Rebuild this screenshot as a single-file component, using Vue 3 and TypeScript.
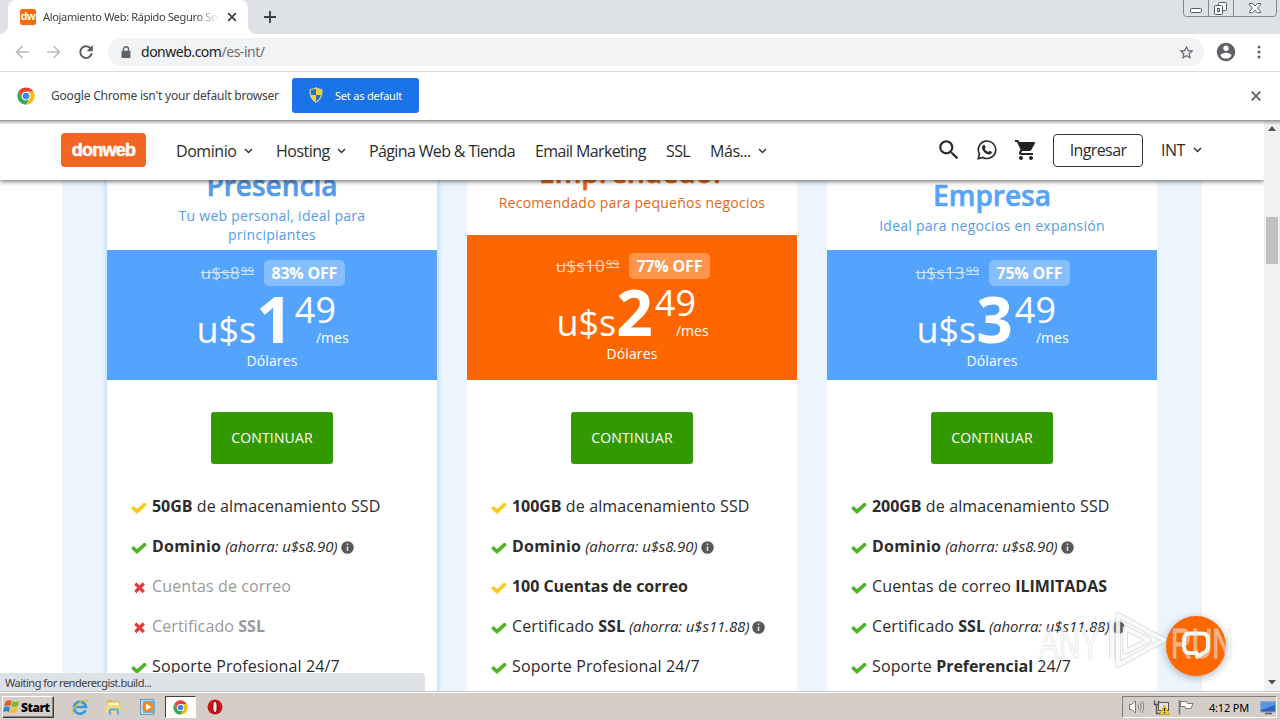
<script setup lang="ts">
interface Feature {
  icon: 'gold' | 'green' | 'cross'
  pre?: string
  bold?: string
  post?: string
  note?: string
}
interface Plan {
  key: string
  name: string
  tagline: string
  oldPrice: string
  off: string
  units: string
  features: Feature[]
}

const nav = [
  { label: 'Dominio', menu: true },
  { label: 'Hosting', menu: true },
  { label: 'Página Web & Tienda', menu: false },
  { label: 'Email Marketing', menu: false },
  { label: 'SSL', menu: false },
  { label: 'Más...', menu: true },
]

const plans: Plan[] = [
  {
    key: 'presencia', name: 'Presencia', tagline: 'Tu web personal, ideal para principiantes',
    oldPrice: '8', off: '83% OFF', units: '1',
    features: [
      { icon: 'gold', bold: '50GB', post: ' de almacenamiento SSD' },
      { icon: 'green', bold: 'Dominio', note: '(ahorra: u$s8.90)' },
      { icon: 'cross', pre: 'Cuentas de correo' },
      { icon: 'cross', pre: 'Certificado ', bold: 'SSL' },
      { icon: 'green', pre: 'Soporte Profesional 24/7' },
    ],
  },
  {
    key: 'emprendedor', name: 'Emprendedor', tagline: 'Recomendado para pequeños negocios',
    oldPrice: '10', off: '77% OFF', units: '2',
    features: [
      { icon: 'gold', bold: '100GB', post: ' de almacenamiento SSD' },
      { icon: 'green', bold: 'Dominio', note: '(ahorra: u$s8.90)' },
      { icon: 'gold', bold: '100 Cuentas de correo' },
      { icon: 'green', pre: 'Certificado ', bold: 'SSL', note: '(ahorra: u$s11.88)' },
      { icon: 'green', pre: 'Soporte Profesional 24/7' },
    ],
  },
  {
    key: 'empresa', name: 'Empresa', tagline: 'Ideal para negocios en expansión',
    oldPrice: '13', off: '75% OFF', units: '3',
    features: [
      { icon: 'green', bold: '200GB', post: ' de almacenamiento SSD' },
      { icon: 'green', bold: 'Dominio', note: '(ahorra: u$s8.90)' },
      { icon: 'green', pre: 'Cuentas de correo ', bold: 'ILIMITADAS' },
      { icon: 'green', pre: 'Certificado ', bold: 'SSL', note: '(ahorra: u$s11.88)' },
      { icon: 'green', pre: 'Soporte ', bold: 'Preferencial', post: ' 24/7' },
    ],
  },
]
</script>

<template>
  <div class="screen">
    <div class="tabstrip">
      <div class="tab">
        <span class="favicon">dw</span>
        <span class="tab-title">Alojamiento Web: Rápido Seguro Sop</span>
        <svg class="tab-close" width="10" height="10" viewBox="0 0 10 10"><path d="M1.2 1.2l7.6 7.6M8.8 1.2L1.2 8.8" stroke="#3c4043" stroke-width="1.7" /></svg>
      </div>
      <svg class="newtab" width="12" height="12" viewBox="0 0 12 12"><path d="M6 0v12M0 6h12" stroke="#3c4043" stroke-width="1.9" /></svg>
      <svg class="winctl" width="94" height="17" viewBox="0 0 94 17">
        <path d="M.5 0v13.500q0 3 3 3h87q3 0 3-3V0" fill="#dfe2e6" stroke="#85898f" />
        <path d="M25.500 0v16M50.500 0v16" stroke="#85898f" />
        <rect x="7.500" y="8.500" width="11" height="4" rx="1" fill="#fff" stroke="#555b63" />
        <rect x="35.500" y="2.500" width="8" height="8" rx="1" fill="#fff" stroke="#555b63" />
        <rect x="31.500" y="5.500" width="8" height="9" rx="1" fill="#fff" stroke="#555b63" />
        <rect x="34.500" y="8.500" width="2" height="3" fill="#dfe2e6" stroke="#555b63" />
        <path d="M66.500 3.500h3.200l2.300 2.500 2.300-2.500h3.200v1.500L74.500 8l3 3.500v1.200h-3.200L72 10.200l-2.300 2.500h-3.200v-1.200l3-3.500-3-3z" fill="#fff" stroke="#555b63" />
      </svg>
    </div>

    <div class="toolbar">
      <svg class="arrow" width="14" height="14" viewBox="0 0 14 14"><path d="M14 7H1.500M7.500 1L1.500 7l6 6" fill="none" stroke="#b9bbbe" stroke-width="1.700" /></svg>
      <svg class="arrow" width="14" height="14" viewBox="0 0 14 14"><path d="M0 7h12.500M6.500 1l6 6-6 6" fill="none" stroke="#b9bbbe" stroke-width="1.700" /></svg>
      <svg class="reload" width="16" height="16" viewBox="0 0 16 16"><path d="M12.700 4.700A5.800 5.800 0 1 0 13.700 9.200" fill="none" stroke="#5a5d61" stroke-width="2" /><path d="M14.800 1v6.200H8.600z" fill="#5a5d61" /></svg>
      <div class="omnibox">
        <svg width="10" height="13" viewBox="0 0 10 13"><path d="M2.500 5V3.300a2.500 2.500 0 0 1 5 0V5" fill="none" stroke="#5f6368" stroke-width="1.400" /><rect x=".5" y="4.700" width="9" height="7.300" rx="1" fill="#5f6368" /></svg>
        <span class="url">donweb.com<i>/es-int/</i></span>
        <svg class="star" width="17" height="17" viewBox="0 0 24 24"><path fill="#5f6368" d="M22 9.240l-7.190-.620L12 2 9.190 8.630 2 9.240l5.460 4.730L5.820 21 12 17.270 18.180 21l-1.630-7.030L22 9.240zM12 15.400l-3.760 2.270 1-4.280-3.320-2.880 4.380-.38L12 6.100l1.710 4.040 4.380.38-3.320 2.880 1 4.280L12 15.400z" /></svg>
      </div>
      <svg class="avatar" width="22" height="22" viewBox="0 0 24 24"><path fill="#5f6368" d="M12 2C6.480 2 2 6.480 2 12s4.480 10 10 10 10-4.480 10-10S17.520 2 12 2zm0 3c1.660 0 3 1.340 3 3s-1.340 3-3 3-3-1.340-3-3 1.340-3 3-3zm0 14.200c-2.500 0-4.710-1.280-6-3.220.03-1.990 4-3.080 6-3.080 1.990 0 5.970 1.090 6 3.080-1.290 1.940-3.500 3.220-6 3.220z" /></svg>
      <svg width="4" height="14" viewBox="0 0 4 14" fill="#5f6368"><circle cx="2" cy="2" r="1.500" /><circle cx="2" cy="7" r="1.500" /><circle cx="2" cy="12" r="1.500" /></svg>
    </div>

    <div class="infobar">
      <svg width="18" height="18" viewBox="0 0 48 48"><circle cx="24" cy="24" r="23" fill="#fff" /><path fill="#ea4335" d="M4.100 12.500A23 23 0 0 1 43.900 12.500H24a11.500 11.500 0 0 0-10 17.200z" /><path fill="#fbbc04" d="M43.900 12.500A23 23 0 0 1 24 47l10-17.300a11.500 11.500 0 0 0 0-11.500l-3-5.700z" /><path fill="#34a853" d="M24 47A23 23 0 0 1 4.100 12.500L14 29.700a11.500 11.500 0 0 0 14 5l3.500-1z" /><circle cx="24" cy="24" r="11.500" fill="#fff" /><circle cx="24" cy="24" r="9" fill="#4285f4" /></svg>
      <span class="info-text">Google Chrome isn't your default browser</span>
      <button class="set-default">
        <svg width="14" height="16" viewBox="0 0 14 16"><path d="M7 .6C5 2 3 2.300 1 2.300c-.3 6 1 10.500 6 13 5-2.500 6.300-7 6-13C11 2.300 9 2 7 .6z" fill="#f3d22f" stroke="#c5cdd4" /><path d="M7 1.500C5.300 2.500 3.500 2.900 1.800 2.900c-.1 1.900 0 3.500.4 5H7zM7 7.900h4.800c-.8 2.800-2.200 4.900-4.800 6.400z" fill="#2a6dbd" /></svg>
        <span>Set as default</span>
      </button>
      <svg class="info-close" width="10" height="10" viewBox="0 0 10 10"><path d="M.7.7l8.600 8.600M9.300.7L.7 9.300" stroke="#5f6368" stroke-width="1.900" /></svg>
    </div>

    <div class="viewport">
      <div class="page">
        <header class="site-header">
          <div class="logo">donweb</div>
          <nav class="nav">
            <span v-for="item in nav" :key="item.label" class="nav-item">
              <span>{{ item.label }}</span>
              <svg v-if="item.menu" width="9" height="6" viewBox="0 0 9 6"><path d="M1 1l3.500 3.500L8 1" fill="none" stroke="#333" stroke-width="1.500" /></svg>
            </span>
          </nav>
          <div class="tools">
            <svg width="26" height="26" viewBox="0 0 24 24"><path fill="#2b2b2b" d="M15.500 14h-.79l-.28-.27C15.410 12.590 16 11.110 16 9.500 16 5.910 13.090 3 9.500 3S3 5.910 3 9.500 5.910 16 9.500 16c1.610 0 3.090-.59 4.230-1.570l.27.28v.79l5 4.990L20.490 19l-4.990-5zm-6 0C7.010 14 5 11.990 5 9.500S7.010 5 9.500 5 14 7.010 14 9.500 11.990 14 9.500 14z" /></svg>
            <svg width="20" height="20" viewBox="0 0 20 20"><path d="M1.200 18.800l1.300-4.700a8.700 8.700 0 1 1 3.400 3.300z" fill="none" stroke="#2b2b2b" stroke-width="1.700" stroke-linejoin="round" /><path fill="#2b2b2b" d="M6.200 5.200c.5-.5 1.200-.5 1.500 0l.9 2c.1.600-.7 1.200-.8 1.500.7 1.500 1.800 2.500 3.400 3.200.5-.2.900-1.200 1.400-1.200l2.100 1c.4.300.2 1.300-.3 1.900-1 .9-2.200 1.200-3.600.7-2.800-.9-4.700-2.800-5.700-5.500-.3-1.300.1-2.700 1.100-3.600z" /></svg>
            <svg width="24" height="24" viewBox="0 0 24 24"><path fill="#222" d="M7 18c-1.100 0-1.990.9-1.990 2S5.900 22 7 22s2-.9 2-2-.9-2-2-2zM1 2v2h2l3.600 7.590-1.350 2.450c-.16.28-.25.610-.25.960 0 1.100.9 2 2 2h12v-2H7.420c-.14 0-.25-.11-.25-.25l.03-.12.900-1.630h7.450c.75 0 1.410-.41 1.750-1.030l3.580-6.490c.08-.14.120-.31.120-.48 0-.55-.45-1-1-1H5.210l-.94-2H1zm16 16c-1.100 0-1.990.9-1.990 2s.89 2 1.990 2 2-.9 2-2-.9-2-2-2z" /></svg>
            <button class="login">Ingresar</button>
            <span class="nav-item region"><span>INT</span><svg width="9" height="6" viewBox="0 0 9 6"><path d="M1 1l3.500 3.500L8 1" fill="none" stroke="#333" stroke-width="1.500" /></svg></span>
          </div>
        </header>

        <main class="band">
          <section v-for="plan in plans" :key="plan.key" class="card" :class="plan.key">
            <div class="heading">
              <h2>{{ plan.name }}</h2>
              <p>{{ plan.tagline }}</p>
            </div>
            <div class="pricebox">
              <div class="promo">
                <span class="old">u$s{{ plan.oldPrice }}<small>99</small></span>
                <span class="off">{{ plan.off }}</span>
              </div>
              <div class="price">
                <span class="cur">u$s</span>
                <b>{{ plan.units }}</b>
                <span class="cents">49</span>
                <small>/mes</small>
              </div>
              <div class="dollars">Dólares</div>
            </div>
            <button class="continue">CONTINUAR</button>
            <ul>
              <li v-for="(f, i) in plan.features" :key="i" :class="f.icon">
                <svg v-if="f.icon === 'cross'" width="16" height="16" viewBox="0 0 16 16"><path d="M4.300 4.500l8.500 8.500M12.800 4.500l-8.500 8.500" stroke="#e23b3b" stroke-width="3.200" /></svg>
                <svg v-else width="16" height="16" viewBox="0 0 16 16"><path d="M2.500 9.300l3.500 3.200 7.500-6.800" fill="none" class="tick" stroke-width="3.700" stroke-linecap="round" /></svg>
                <span class="label">{{ f.pre }}<b v-if="f.bold" :class="{ wide: f.bold === 'Dominio' }">{{ f.bold }}</b>{{ f.post }}</span>
                <em v-if="f.note">{{ f.note }}</em>
                <svg v-if="f.note" class="info" width="13" height="13" viewBox="0 0 13 13"><circle cx="6.500" cy="6.500" r="6.300" fill="#595959" /><path d="M6.500 2.500v1.600M6.500 5.500v4.500" stroke="#e4e4e4" stroke-width="1.500" /></svg>
              </li>
            </ul>
          </section>
        </main>
      </div>
      <div class="scrollbar">
        <svg width="8" height="5" viewBox="0 0 8 5"><path d="M0 5l4-5 4 5z" fill="#505050" /></svg>
        <div class="thumb"></div>
        <svg class="down" width="8" height="5" viewBox="0 0 8 5"><path d="M0 0l4 4.500L8 0z" fill="#505050" /></svg>
      </div>
      <div class="status">Waiting for renderer.gist.build...</div>
      <div class="chat">
        <svg width="32" height="34" viewBox="0 0 28 30"><path d="M15 24.500l-.2-3.200H8.500q-5 0-5-5V9q0-5 5-5h11q5 0 5 5v7.500q0 3-4.500 5z" fill="none" stroke="#fff" stroke-width="3.400" stroke-linejoin="round" /></svg>
      </div>
      <svg class="watermark" width="206" height="74" viewBox="0 0 206 74">
        <g class="wm-text"><text x="5" y="51" textLength="61" lengthAdjust="spacingAndGlyphs">ANY</text><text x="137" y="51" textLength="62" lengthAdjust="spacingAndGlyphs">RUN</text></g>
        <g fill="none" stroke-linejoin="round"><path d="M78 13v39M84 8v50l46-25L84 8zM91 21v24l24-12z" stroke="#a4a9ae" stroke-opacity=".35" stroke-width="6" /><path d="M78 13v39M84 8v50l46-25L84 8zM91 21v24l24-12z" stroke="#fff" stroke-opacity=".8" stroke-width="4" /></g>
      </svg>
    </div>

    <footer class="taskbar">
      <div class="start">
        <svg width="17" height="16" viewBox="0 0 17 16"><path d="M2.500 2.500Q6 .5 8.500 2L7.400 7Q4.500 5.800 1.200 7.500z" fill="#e35b24" /><path d="M9.500 2.300q3 1.500 6.500-.3l-1.200 5q-3.400 1.700-6.400.3z" fill="#79b829" /><path d="M1 8.500q3-1.700 6.200-.5L6 13q-3-1.500-6 .5z" fill="#3088cc" /><path d="M8.200 8.400q3 1.400 6.400-.3l-1.200 5q-3.500 1.700-6.400.3z" fill="#f4bf27" /></svg>
        <b>Start</b>
      </div>
      <div class="quick">
        <svg width="18" height="18" viewBox="0 0 18 18"><path d="M14.500 12.300A6 6 0 1 1 15 9H5" fill="none" stroke="#2f9bdc" stroke-width="2.700" /><path d="M1.500 16C-.8 13 5.500 6 11 3c4-2 6-1.500 5 1.500" fill="none" stroke="#e9b934" stroke-width="1.300" /></svg>
        <svg width="18" height="18" viewBox="0 0 18 18"><path d="M2 2h5l1 1.500h7V14H2z" fill="#dfba52" /><path d="M3 4.500h11v3H3z" fill="#fff5bb" /><path d="M1.500 7h14v7.500h-14z" fill="#f3d97c" /><path d="M5 16.500v-4q0-1 1-1h6q1 0 1 1v4" fill="none" stroke="#58aed4" stroke-width="2" /></svg>
        <svg width="18" height="18" viewBox="0 0 18 18"><rect x="1.500" y="1.500" width="13" height="15" fill="#b9dcf2" stroke="#5b9dcc" /><rect x="4" y="3" width="12" height="12" fill="#6baede" /><circle cx="9" cy="9" r="5.700" fill="#f28a1c" /><path d="M7.200 5.700v6.600L12.500 9z" fill="#fff" /></svg>
        <span class="active"><svg width="15" height="15" viewBox="0 0 48 48"><path fill="#ea4335" d="M4.100 12.500A23 23 0 0 1 43.900 12.500H24a11.500 11.500 0 0 0-10 17.200z" /><path fill="#fbbc04" d="M43.900 12.500A23 23 0 0 1 24 47l10-17.300a11.500 11.500 0 0 0 0-11.500l-3-5.700z" /><path fill="#34a853" d="M24 47A23 23 0 0 1 4.100 12.500L14 29.700a11.500 11.500 0 0 0 14 5l3.500-1z" /><circle cx="24" cy="24" r="11.500" fill="#fff" /><circle cx="24" cy="24" r="9" fill="#4285f4" /></svg></span>
        <svg width="16" height="16" viewBox="0 0 16 16"><circle cx="8" cy="8" r="7.500" fill="#c4161c" /><ellipse cx="8" cy="8" rx="3" ry="6" fill="#7d090d" /><ellipse cx="8" cy="8" rx="1.700" ry="5.200" fill="#f3e3e3" /></svg>
      </div>
      <div class="tray">
        <svg width="17" height="16" viewBox="0 0 17 16"><path d="M1.500 5.500h2L7.500 2v12l-4-3.500h-2z" fill="#fff" stroke="#777" /><path d="M10 5.500q1.500 2.500 0 5M12 3.500q2.700 4.500 0 9M14 2q3.500 6 0 12" fill="none" stroke="#888" /></svg>
        <svg width="17" height="16" viewBox="0 0 17 16"><rect x="5.500" y="3.500" width="10" height="8" fill="#e3e3e3" stroke="#555" /><path d="M1.500 1.500v4h4v-4M3.500 6v8.500h4" fill="none" stroke="#555" stroke-width="1.400" /><path d="M11.500 6l5 9.500h-10z" fill="#f6d21b" stroke="#b8930d" stroke-width=".7" /><path d="M11.500 9v3.200M11.500 13v1.300" stroke="#222" stroke-width="1.300" /></svg>
        <svg width="16" height="16" viewBox="0 0 16 16"><path d="M1.500 1v14.500" stroke="#777" stroke-width="1.600" /><path d="M2.500 2.500h6l1 2h5.500L13 9.500H8l-1-2H2.500z" fill="#fff" stroke="#777" /></svg>
        <span class="clock">4:12 PM</span>
        <svg width="16" height="15" viewBox="0 0 16 15"><rect x=".5" y="1.500" width="15" height="10.500" fill="#2c63c8" stroke="#8fa8c7" /><path d="M1 2h14v3L1 10z" fill="#5a96e6" /><path d="M5 13.500h7" stroke="#555" stroke-width="1.500" /></svg>
      </div>
    </footer>
  </div>
</template>

<style>
body { margin: 0; overflow: hidden; }
</style>

<style scoped>
* { box-sizing: border-box; }
svg { display: block; flex: none; }
button { font: inherit; border: 0; padding: 0; }
.screen { width: 1280px; height: 720px; overflow: hidden; display: flex; flex-direction: column; background: #fff; font-family: "Open Sans", "Noto Sans", sans-serif; color: #2b2b2b; }

.tabstrip { height: 34px; flex: none; background: #dee1e6; display: flex; align-items: flex-start; padding-left: 8px; font-family: "Noto Sans", sans-serif; }
.tab { width: 240px; height: 34px; background: #fff; border-radius: 8px 8px 0 0; display: flex; align-items: center; padding: 0 11px 0 12px; position: relative; }
.tab::before, .tab::after { content: ""; position: absolute; bottom: 0; width: 8px; height: 8px; }
.tab::before { left: -8px; background: radial-gradient(circle at 0 0, #dee1e6 7.500px, #fff 8px); }
.tab::after { right: -8px; background: radial-gradient(circle at 100% 0, #dee1e6 7.500px, #fff 8px); }
.favicon { width: 16px; height: 16px; border-radius: 2px; background: #f96a0c; color: #fff; font: bold 11px/15px "Liberation Sans", sans-serif; letter-spacing: -.5px; text-align: center; }
.tab-title { width: 176px; margin-left: 7px; padding-bottom: 1px; overflow: hidden; white-space: nowrap; font-size: 11px; letter-spacing: -.33px; color: #3c4043; -webkit-mask-image: linear-gradient(90deg, #000 152px, transparent); mask-image: linear-gradient(90deg, #000 152px, transparent); }
.tab-close { margin-left: auto; }
.newtab { margin: 11px 0 0 16px; }
.winctl { margin-left: auto; margin-right: 3px; }

.toolbar { height: 38px; flex: none; display: flex; align-items: center; padding: 0 0 1px 15px; border-bottom: 1px solid #d9dadc; }
.arrow { margin-right: 18px; }
.reload { margin-left: -1px; margin-right: 14px; }
.omnibox { width: 1096px; height: 28px; flex: none; border-radius: 14px; background: #f1f3f4; display: flex; align-items: center; padding: 0 9px 0 13px; }
.url { margin-left: 10px; font-size: 14px; line-height: 20px; letter-spacing: -.48px; color: #202124; font-family: "Noto Sans", sans-serif; }
.url i { font-style: normal; color: #6b6f74; }
.star { margin-left: auto; }
.avatar { margin-left: 11px; margin-right: 20px; }

.infobar { height: 48px; flex: none; display: flex; align-items: center; padding: 0 19px 1px 17px; font-family: "Noto Sans", sans-serif; }
.info-text { margin-left: 16px; width: 241px; white-space: nowrap; font-size: 12px; letter-spacing: -.2px; color: #3c4043; }
.set-default { width: 127px; height: 35px; border-radius: 3px; background: #1a73e8; color: #fff; display: flex; align-items: center; padding: 0 0 1px 17px; gap: 12px; font-size: 11px; letter-spacing: -.2px; }
.info-close { margin-left: auto; }

.viewport { height: 571px; flex: none; position: relative; display: flex; border-top: 1px solid #9b9b9b; }
.viewport::before { content: ""; position: absolute; z-index: 6; top: 0; left: 0; right: 0; height: 4px; background: linear-gradient(rgba(0,0,0,.28), transparent); }
.page { width: 1264px; overflow: hidden; display: flex; flex-direction: column; }
.site-header { height: 59px; flex: none; position: relative; z-index: 3; background: #fff; box-shadow: 0 1px 5px rgba(0,0,0,.65); display: flex; align-items: center; padding: 0 62px 1px 61px; font-size: 16px; }
.logo { width: 85px; height: 34px; border-radius: 4px; background: #f26522; color: #fff; font: bold 18px/34px "Liberation Sans", sans-serif; letter-spacing: -.75px; -webkit-text-stroke: .5px #fff; text-align: center; }
.nav { margin-left: 30px; padding-top: 1px; display: grid; grid-template-columns: 100px 93px 166px 131px 44px 57px; }
.nav-item { display: flex; align-items: center; justify-content: space-between; white-space: nowrap; line-height: 22px; letter-spacing: -.63px; }
.nav-item:nth-child(1), .nav-item:nth-child(6) { letter-spacing: -.45px; }
.nav-item:nth-child(1) { padding-right: 23px; }
.nav-item:nth-child(2) { padding-right: 23px; letter-spacing: -.5px; }
.tools { margin-left: auto; display: flex; align-items: center; }
.tools > svg:nth-child(1) { margin-right: 15px; }
.tools > svg:nth-child(2) { margin-right: 17px; }
.tools > svg:nth-child(3) { margin-right: 15px; }
.login { width: 90px; height: 33px; border: 1px solid #333; border-radius: 4px; background: #fff; color: #2b2b2b; letter-spacing: -.6px; }
.tools .region { width: 41px; margin-left: 18px; padding: 0; letter-spacing: -.5px; }

.band { width: 1140px; height: 511px; flex: none; margin-left: 62px; padding: 0 45px; background: #ecf5fe; display: grid; grid-template-columns: repeat(3, 330px); gap: 30px; }
.card { height: 540px; background: #fff; display: flex; flex-direction: column; align-items: center; }
.presencia { box-shadow: 0 0 6px rgba(83,163,255,.5); }
.heading { height: 70px; width: 230px; flex: none; display: flex; flex-direction: column; justify-content: flex-end; text-align: center; color: #549bea; padding-bottom: 6px; }
.heading h2 { margin: 0 0 2px; font-size: 28px; line-height: 38px; font-weight: 600; -webkit-text-stroke: .6px currentColor; }
.heading p { margin: 0; font-size: 14px; line-height: 19px; letter-spacing: .25px; }
.emprendedor .heading { height: 55px; width: 330px; color: #df6616; padding-bottom: 23px; }
.empresa .heading { width: 330px; padding-bottom: 15px; }
.empresa h2 { color: #55a4fc; }
.pricebox { width: 330px; height: 130px; flex: none; background: #53a3ff; color: #fff; display: flex; flex-direction: column; align-items: center; padding-top: 10px; }
.emprendedor .pricebox { height: 145px; background: #ff6600; padding-top: 18px; }
.promo { display: flex; align-items: center; gap: 10px; height: 26px; margin-left: 2px; }
.old { opacity: .72; font-size: 17px; line-height: 24px; letter-spacing: .35px; text-decoration: line-through; position: relative; top: 1px; }
.old small { font-size: 11px; position: relative; top: -4px; margin-left: 1px; text-decoration: line-through; }
.off { width: 81px; height: 26px; border-radius: 5px; background: rgba(255,255,255,.3); font-size: 16px; font-weight: 700; line-height: 26px; text-align: center; letter-spacing: -.2px; padding-right: 1px; }
.price { height: 65px; flex: none; display: flex; align-items: baseline; padding-top: 9px; margin-left: 1px; }
.cur { font-size: 36px; line-height: 40px; }
.price b { font-size: 64px; line-height: 48px; }
.cents { font-size: 36px; line-height: 36px; position: relative; top: -20px; margin-left: 2px; }
.price small { font-size: 14px; line-height: 16px; margin-left: -20px; }
.dollars { font-size: 14px; line-height: 19px; letter-spacing: .1px; }
.continue { width: 122px; height: 52px; flex: none; margin-top: 32px; border-radius: 3px; background: #339900; color: #fff; font-size: 14px; letter-spacing: .15px; padding-bottom: 2px; }
ul { list-style: none; margin: 22px 0 0; padding: 0 0 0 24px; width: 330px; }
li { height: 40px; display: flex; align-items: center; white-space: nowrap; font-size: 16px; letter-spacing: .12px; }
li > svg:first-child { margin-right: 5px; position: relative; top: 1px; }
li.cross { color: #999; }
.label { white-space: pre; }
.label b { letter-spacing: -.04px; }
.label b.wide { letter-spacing: .22px; }
em { margin-left: 4px; font-size: 15px; letter-spacing: -.1px; }
.info { margin-left: 3px; position: relative; top: 1px; }
.gold .tick { stroke: #fbc81c; }
.green .tick { stroke: #4cb52a; }

.scrollbar { width: 16px; background: #f1f1f1; display: flex; flex-direction: column; align-items: center; padding-top: 5px; }
.thumb { width: 12px; height: 47px; margin-top: 86px; background: #c1c1c1; }
.down { margin-top: auto; margin-bottom: 6px; }
.status { position: absolute; left: 0; bottom: 0; width: 425px; height: 18px; background: #dee1e6; border-radius: 0 4px 0 0; padding-left: 5px; font: 11px/20px "Noto Sans", sans-serif; color: #3c4043; z-index: 4; letter-spacing: -.5px; }
.chat { position: absolute; z-index: 4; left: 1166px; top: 495px; width: 60px; height: 60px; border-radius: 50%; background: #ff6700; box-shadow: 0 2px 8px rgba(0,0,0,.3); display: flex; align-items: center; justify-content: center; }
.watermark { position: absolute; z-index: 5; left: 1034px; top: 486px; }
.wm-text { font: 42px "Liberation Sans", sans-serif; fill: rgba(255,255,255,.45); stroke: rgba(215,218,222,.5); stroke-width: 1.500px; }

.taskbar { height: 29px; flex: none; background: #d5cec8; border-top: 1px solid #c9c5bd; box-shadow: inset 0 1px #fff; display: flex; align-items: center; padding: 2px 3px 0 2px; }
.start { width: 52px; height: 22px; background: #d5cec8; border: 1px solid; border-color: #fff #404040 #404040 #fff; box-shadow: inset -1px -1px #84807b; display: flex; align-items: center; font: bold 12px "Noto Sans", sans-serif; color: #000; }
.start b { margin-left: 1px; letter-spacing: -.5px; }
.quick { display: flex; align-items: center; margin-left: 17px; }
.quick > svg { margin-right: 16px; }
.quick > svg:nth-child(3) { margin-right: 8px; }
.active { width: 31px; height: 22px; background: #fff; border: 1px solid; border-color: #404040 #fff #fff #404040; display: flex; align-items: center; justify-content: center; margin-right: 11px; }
.tray { width: 155px; height: 22px; margin-left: auto; border: 1px solid; border-color: #84807b #fff #fff #84807b; display: flex; align-items: center; padding: 0 0 0 5px; }
.tray svg { margin-right: 8px; }
.tray svg:last-child { margin: 0 0 0 auto; }
.clock { font: 11px "Noto Sans", sans-serif; letter-spacing: -.2px; color: #000; margin-left: 7px; }
</style>
